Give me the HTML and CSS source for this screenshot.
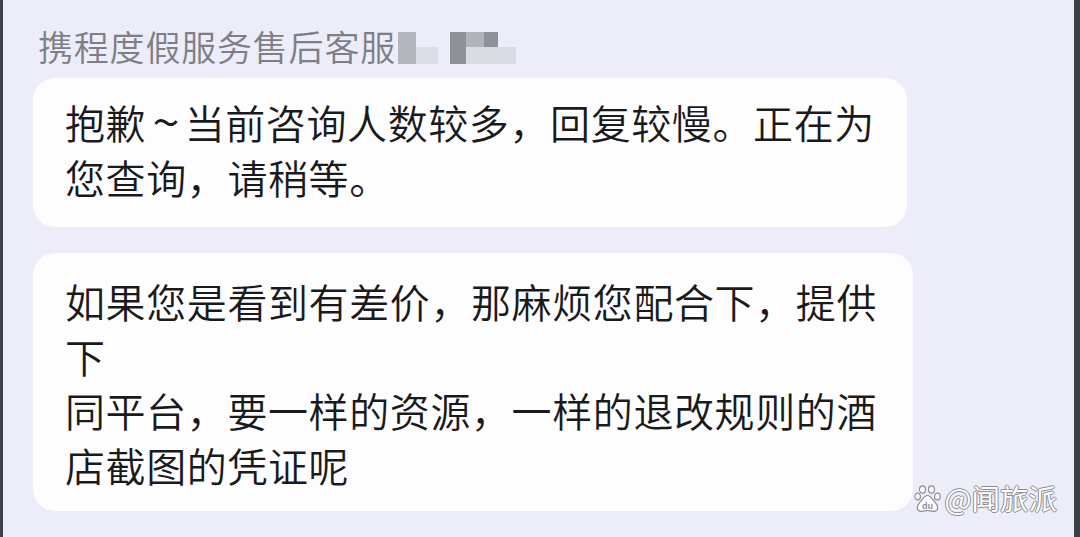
FILE: index.html
```html
<!DOCTYPE html>
<html lang="zh-CN">
<head>
  <meta charset="UTF-8">
  <meta name="viewport" content="width=device-width, initial-scale=1.0">
  <title>携程度假服务售后客服</title>
  <link rel="stylesheet" href="styles.css">
</head>
<body>
  <div class="screen">
    <!-- sender name, the tail is pixelated -->
    <div class="sender">
      携程度假服务售后客服<span class="mosaic">
        <span class="px px-a"></span>
        <span class="px px-b"></span>
        <span class="px px-c"></span>
        <span class="px px-d"></span>
        <span class="px px-e"></span>
        <span class="px px-f"></span>
      </span>
    </div>

    <div class="bubble bubble-short">
      抱歉<span class="tilde">~</span>当前咨询人数较多，回复较慢。正在为<br>您查询，请稍等。
    </div>

    <div class="bubble bubble-long">
      如果您是看到有差价，那麻烦您配合下，提供<br>下<br>同平台，要一样的资源，一样的退改规则的酒<br>店截图的凭证呢
    </div>

    <!-- watermark -->
    <div class="watermark">
      <svg class="paw" width="27" height="27" viewBox="0 0 27 27">
        <ellipse cx="8.5" cy="4.5" rx="3" ry="3.6" />
        <ellipse cx="17.5" cy="4.5" rx="3" ry="3.6" />
        <ellipse cx="3.6" cy="11.5" rx="2.8" ry="3.4" />
        <ellipse cx="23.4" cy="11.5" rx="2.8" ry="3.4" />
        <path d="M13.5 10.5c-3 0-4.6 3.2-6.6 5.6-1.9 2.3-3.6 3.8-3.6 6.3 0 2.7 2.2 3.9 4.5 3.9 2.4 0 3.6-0.8 5.7-0.8s3.3 0.8 5.7 0.8c2.3 0 4.5-1.2 4.5-3.9 0-2.5-1.7-4-3.6-6.3-2-2.4-3.6-5.6-6.6-5.6z" />
        <text x="13.5" y="23.6" text-anchor="middle">du</text>
      </svg>
      <span class="mark-text">@闻旅派</span>
    </div>
  </div>
</body>
</html>
```

FILE: styles.css
```css
html, body {
  margin: 0;
  padding: 0;
}
body {
  background-color: #3f3f46;
  font-family: "Noto Sans CJK SC", "Noto Sans", sans-serif;
}
.screen {
  position: relative;
  height: 537px;
  margin: 0 6px 0 3px;
  background-color: #ecedf8;
  overflow: hidden;
}
.sender {
  padding: 25px 0 0 35px;
  height: 42px;
  line-height: 42px;
  font-size: 35px;
  font-weight: 350;
  letter-spacing: 0.8px;
  color: #7e7e85;
  white-space: nowrap;
}
.mosaic {
  display: inline-grid;
  grid-template-columns: 18px 22px 12px 16px 18px 14px 18px;
  grid-template-rows: 15px 17px;
  vertical-align: -3px;
  margin-left: 2px;
}
.px-a { grid-column: 1; grid-row: 1 / 3; background-color: #b6b6be; }
.px-b { grid-column: 2; grid-row: 2; background-color: #dcdde5; }
.px-c { grid-column: 4; grid-row: 1 / 3; background-color: #8f8f97; }
.px-d { grid-column: 5; grid-row: 1; background-color: #b2b2ba; }
.px-e { grid-column: 6; grid-row: 1; background-color: #909099; }
.px-f { grid-column: 5 / 8; grid-row: 2; background-color: #d9dae2; }
.bubble {
  box-sizing: border-box;
  margin-left: 30px;
  background-color: #fdfdfd;
  border-radius: 22px;
  font-size: 40px;
  font-weight: 350;
  letter-spacing: 0.6px;
  line-height: 55px;
  color: #1a1a1c;
  white-space: nowrap;
}
.tilde {
  font-size: 50px;
  line-height: 40px;
  letter-spacing: 0;
  padding: 0 5px 0 6px;
  vertical-align: -2px;
}
.bubble-short {
  width: 874px;
  margin-top: 11px;
  padding: 17px 32px 22px;
}
.bubble-long {
  width: 880px;
  margin-top: 26px;
  padding: 21px 32px 19px;
  line-height: 54.5px;
}
.watermark {
  position: absolute;
  right: 17px;
  bottom: 25px;
  display: flex;
  align-items: center;
  gap: 4px;
  height: 28px;
}
.paw ellipse, .paw path {
  fill: #ffffff;
  stroke: #8c8c94;
  stroke-width: 1.2;
}
.paw text {
  font-family: "Liberation Sans", sans-serif;
  font-size: 9px;
  font-weight: bold;
  fill: #8c8c94;
}
.mark-text {
  font-size: 28.5px;
  line-height: 28px;
  color: #ffffff;
  text-shadow: 1px 0 0 #8c8c94, -1px 0 0 #8c8c94, 0 1px 0 #8c8c94, 0 -1px 0 #8c8c94;
}
```
